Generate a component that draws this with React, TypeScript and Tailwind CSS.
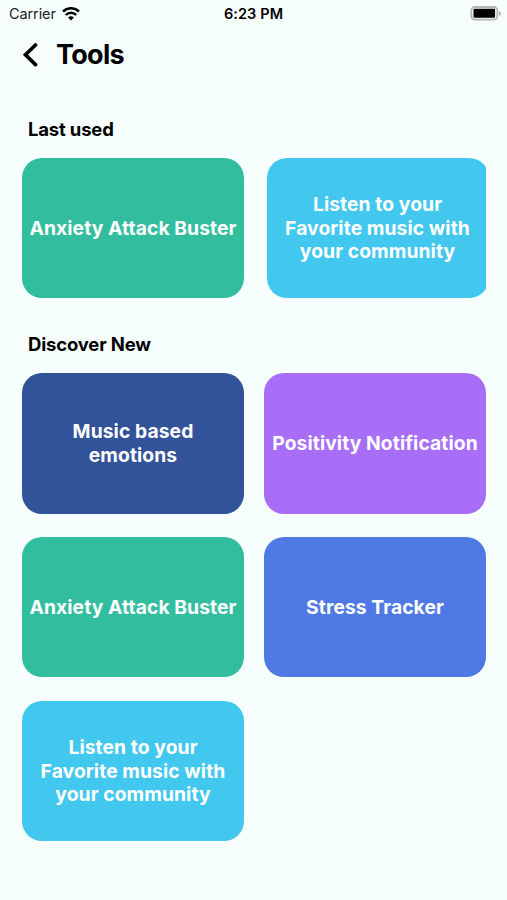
interface Tool {
  title: string;
  color: string;
}

const anxietyBuster: Tool = {
  title: 'Anxiety Attack Buster',
  color: 'bg-[#32be9e]',
};

const communityMusic: Tool = {
  title: 'Listen to your Favorite music with your community',
  color: 'bg-[#42c8ee]',
};

const discoverTools: Tool[] = [
  { title: 'Music based emotions', color: 'bg-[#325299]' },
  { title: 'Positivity Notification', color: 'bg-[#a86ef7]' },
  anxietyBuster,
  { title: 'Stress Tracker', color: 'bg-[#4f7ae6]' },
  communityMusic,
];

export default function App() {
  return (
    <div className="h-[900px] w-[507px] overflow-hidden bg-[#f7fffe] font-['Inter',sans-serif] text-black">
      <StatusBar />

      <header className="flex h-[55.5px] items-center pl-[22px]">
        <svg
          className="h-6 w-4"
          viewBox="0 0 16 24"
          fill="none"
          stroke="currentColor"
          strokeWidth={3.7}
          strokeLinecap="round"
        >
          <path d="M13.5 2 3.500 11.800l10 9.800" />
        </svg>
        <h1 className="ml-[18px] text-[27px] font-bold tracking-[-0.7px]">Tools</h1>
      </header>

      <main className="pl-[22px]">
        <SectionTitle>Last used</SectionTitle>
        <div className="flex w-[464px] gap-[22.5px] overflow-hidden">
          <ToolCard tool={anxietyBuster} />
          <ToolCard tool={communityMusic} />
        </div>

        <SectionTitle>Discover New</SectionTitle>
        <div className="grid grid-cols-[222px_222px] gap-x-5 gap-y-[23.3px]">
          {discoverTools.map((tool) => (
            <ToolCard key={tool.title} tool={tool} />
          ))}
        </div>
      </main>
    </div>
  );
}

function StatusBar() {
  return (
    <div className="grid h-[27px] grid-cols-[1fr_60px_1fr] items-center pr-[5px] pl-[9px]">
      <div className="flex items-center gap-1.5 text-[14.5px] tracking-[-0.1px] text-[#222]">
        <span>Carrier</span>
        <svg className="h-[14px] w-[18px] text-black" viewBox="0 0 18 14" fill="none" stroke="currentColor" strokeWidth={2.5}>
          <path d="M1 4.500a11.400 11.400 0 0 1 16 0M3.800 8a7.200 7.200 0 0 1 10.400 0" />
          <path d="m9 13.500-2.900-2.900a4.100 4.100 0 0 1 5.800 0z" fill="currentColor" stroke="none" />
        </svg>
      </div>
      <span className="relative -left-[2px] text-center text-[14.5px] font-semibold whitespace-nowrap tracking-[0.1px]">
        6:23 PM
      </span>
      <svg className="h-[15px] w-8 justify-self-end" viewBox="0 0 32 15">
        <rect x="1.300" y="1" width="26" height="12.600" rx="3.500" fill="none" stroke="#b3b5b5" strokeWidth={1.8} />
        <rect x="3.500" y="2.800" width="21.600" height="9" rx="1" />
        <path d="M28.800 5c3 1.200 3 3.800 0 5z" fill="#b3b5b5" />
      </svg>
    </div>
  );
}

function SectionTitle({ children }: { children: string }) {
  return (
    <h2 className="flex h-[75px] items-end pb-[17px] pl-1.5 text-[18.5px] leading-6 font-bold tracking-[-0.18px]">
      {children}
    </h2>
  );
}

function ToolCard({ tool }: { tool: Tool }) {
  return (
    <div
      className={`flex h-[140.5px] w-[222px] shrink-0 items-center justify-center rounded-[20px] px-[6.5px] pt-px text-center text-[19.3px] leading-[23.5px] font-bold tracking-[0.08px] text-white ${tool.color}`}
    >
      {tool.title}
    </div>
  );
}
